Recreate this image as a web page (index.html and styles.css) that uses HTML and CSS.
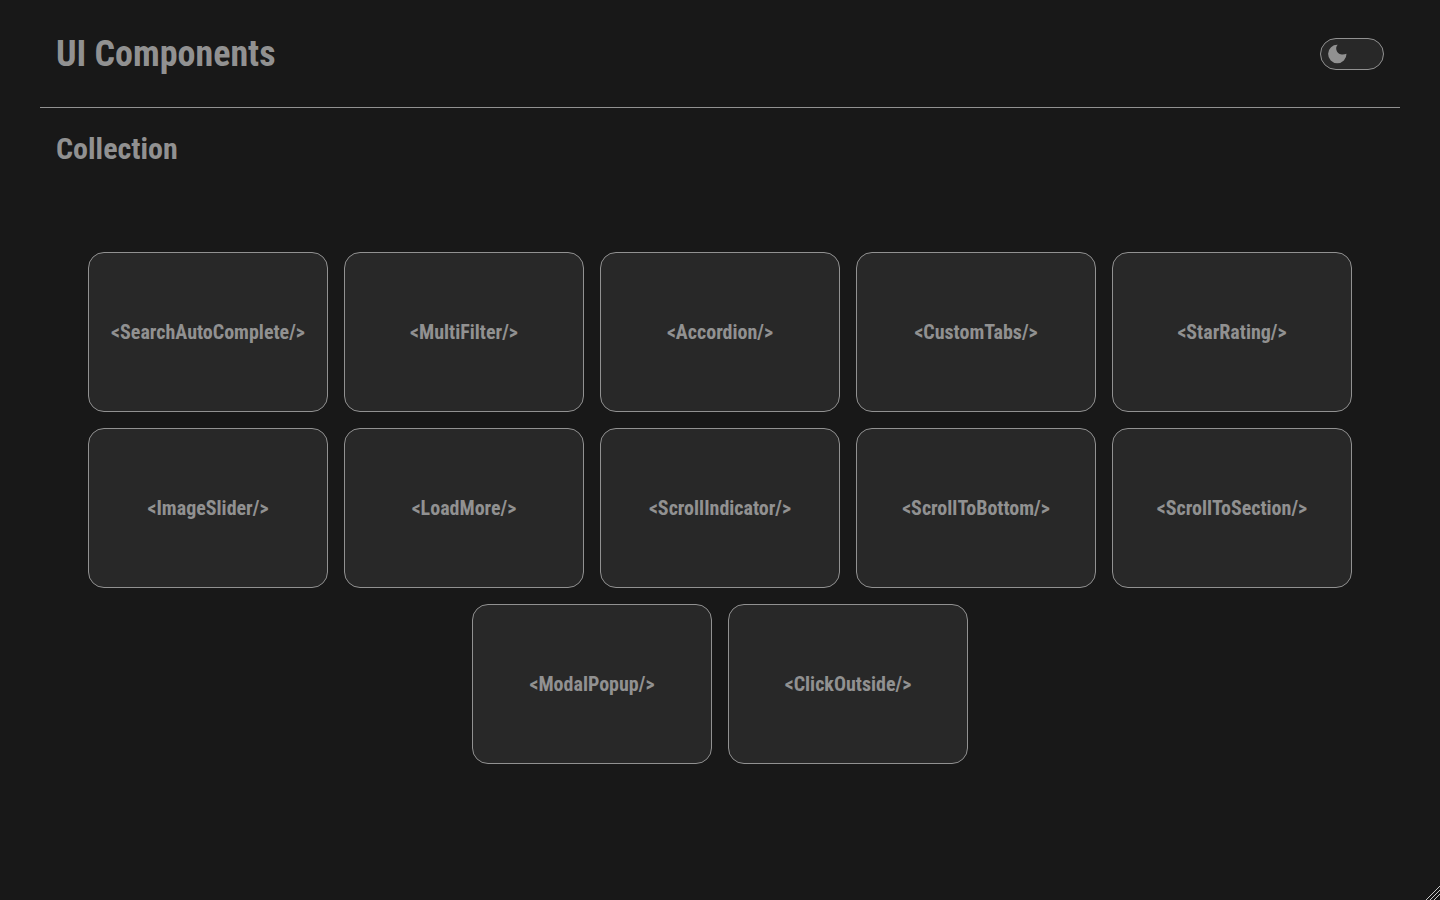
FILE: index.html
```html
<!DOCTYPE html>
<html lang="en">
<head>
<meta charset="utf-8">
<title>UI Components</title>
<link rel="stylesheet" href="styles.css">
</head>
<body>
<div class="app">
  <header class="header">
    <h1 class="title">UI Components</h1>
    <button class="theme-toggle" type="button" aria-label="Toggle theme">
      <svg class="moon" viewBox="0 0 24 24" aria-hidden="true"><path d="M12.700 2.800C11.500 3.900 11.100 5.400 11.200 7C11.500 10 13.800 12.300 16.800 12.500C18.400 12.600 20 12.400 21.500 11.800A9.200 9.200 0 1 1 12.700 2.800Z"/></svg>
    </button>
  </header>
  <main>
    <h2 class="subtitle">Collection</h2>
    <nav class="cards">
      <a class="card" href="#">&lt;SearchAutoComplete/&gt;</a>
      <a class="card" href="#">&lt;MultiFilter/&gt;</a>
      <a class="card" href="#">&lt;Accordion/&gt;</a>
      <a class="card" href="#">&lt;CustomTabs/&gt;</a>
      <a class="card" href="#">&lt;StarRating/&gt;</a>
      <a class="card" href="#">&lt;ImageSlider/&gt;</a>
      <a class="card" href="#">&lt;LoadMore/&gt;</a>
      <a class="card" href="#">&lt;ScrollIndicator/&gt;</a>
      <a class="card" href="#">&lt;ScrollToBottom/&gt;</a>
      <a class="card" href="#">&lt;ScrollToSection/&gt;</a>
      <a class="card" href="#">&lt;ModalPopup/&gt;</a>
      <a class="card" href="#">&lt;ClickOutside/&gt;</a>
    </nav>
  </main>
  <svg class="grip" viewBox="0 0 15 15" aria-hidden="true"><path d="M1 15 15 1M5 15 15 5M9 15l6-6"/></svg>
</div>
</body>
</html>
```
FILE: styles.css
```css
* { box-sizing: border-box; margin: 0; padding: 0; }
body {
  background: #181818;
  color: #919191;
  font-family: "Roboto Condensed", Roboto, sans-serif;
}
.app { min-height: 100vh; padding: 0 40px; }
.header {
  display: flex;
  align-items: center;
  justify-content: space-between;
  height: 108px;
  padding: 0 16px;
  border-bottom: 1px solid #919191;
}
.title { font-size: 36px; line-height: 42px; }
.theme-toggle {
  display: flex;
  align-items: center;
  width: 64px;
  height: 32px;
  padding: 0 4px;
  border: 1px solid #919191;
  border-radius: 16px;
  background: #282828;
}
.moon { width: 24px; height: 24px; fill: #919191; }
.subtitle { padding: 24px 16px; font-size: 30px; line-height: 34px; }
.cards {
  display: flex;
  flex-wrap: wrap;
  justify-content: center;
  gap: 16px;
  padding: 62px 40px;
}
.card {
  display: flex;
  align-items: center;
  justify-content: center;
  width: 240px;
  height: 160px;
  border: 1px solid #919191;
  border-radius: 16px;
  background: #282828;
  color: #919191;
  font-size: 20px;
  font-weight: 700;
  text-decoration: none;
}
.grip {
  position: fixed;
  right: 0;
  bottom: 0;
  width: 15px;
  height: 15px;
  fill: none;
  stroke: #c8c8c8;
}
```
